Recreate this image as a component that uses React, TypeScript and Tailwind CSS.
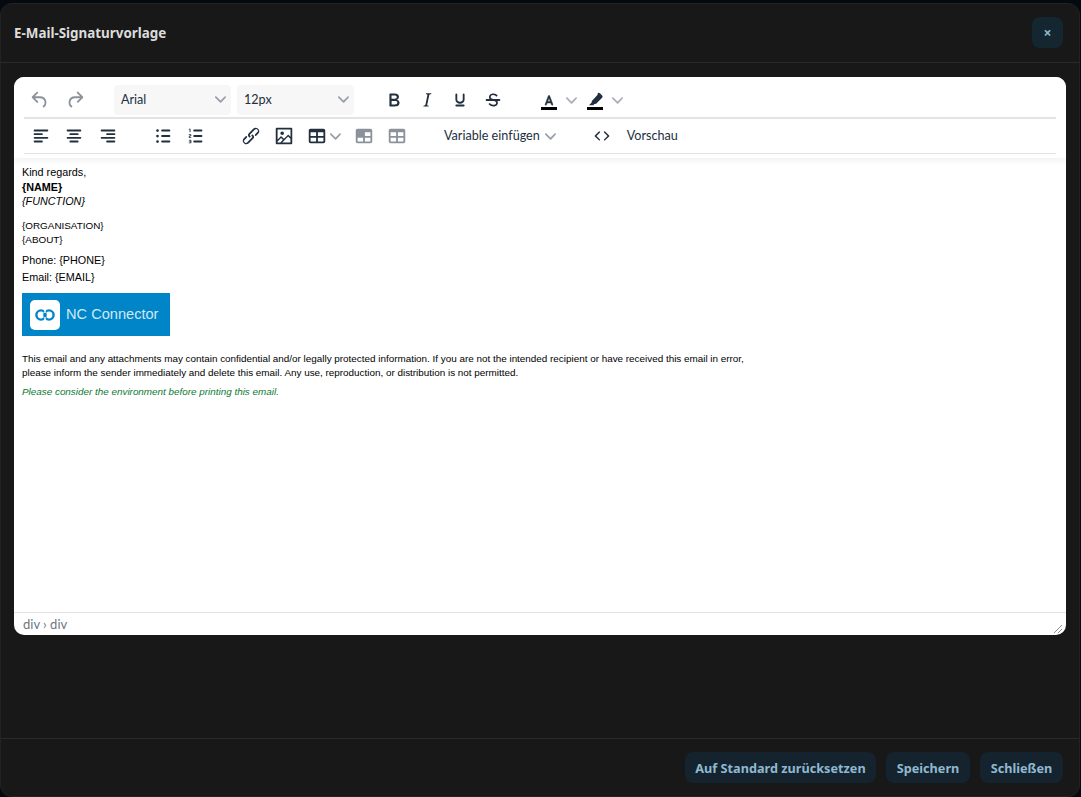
import React from "react";

const P: Record<string, string> = {
  undo: "M6.4 8H12c3.7 0 6.2 2 6.8 5.1.6 2.7-.4 5.6-2.3 6.8a1 1 0 0 1-1-1.8c1.1-.6 1.8-2.7 1.4-4.6-.5-2.1-2.1-3.5-4.9-3.5H6.4l3.3 3.3a1 1 0 1 1-1.4 1.4l-5-5a1 1 0 0 1 0-1.4l5-5a1 1 0 0 1 1.4 1.4L6.4 8Z",
  redo: "M17.6 10H12c-2.8 0-4.4 1.4-4.9 3.5-.4 2 .3 4 1.4 4.6a1 1 0 1 1-1 1.8c-2-1.2-2.9-4.1-2.3-6.8.6-3 3-5.1 6.8-5.1h5.6l-3.3-3.3a1 1 0 1 1 1.4-1.4l5 5a1 1 0 0 1 0 1.4l-5 5a1 1 0 0 1-1.4-1.4l3.3-3.3Z",
  bold: "M7.8 19c-.3 0-.5 0-.6-.2l-.2-.5V5.7c0-.2 0-.4.2-.5l.6-.2h5c1.5 0 2.7.3 3.5 1 .7.6 1.1 1.4 1.1 2.5a3 3 0 0 1-.6 1.9c-.4.6-1 1-1.6 1.2.4.1.9.3 1.3.6s.8.7 1 1.2c.4.4.5 1 .5 1.6 0 1.3-.4 2.3-1.3 3-.8.7-2.1 1-3.8 1H7.8Zm5-8.3c.6 0 1.2-.1 1.6-.5.4-.3.6-.7.6-1.3 0-1.1-.8-1.7-2.3-1.7H9.3v3.5h3.4Zm.5 6c.7 0 1.3-.1 1.7-.4.4-.4.6-.9.6-1.5s-.2-1-.7-1.4c-.4-.3-1-.4-2-.4H9.4v3.8h4Z",
  italic: "M16.7 4.7l-.1.9h-.3c-.6 0-1 0-1.4.3-.3.3-.4.6-.5 1.1l-2.1 9.8v.6c0 .5.4.8 1.4.8h.2l-.2.8H8l.2-.8h.2c1.1 0 1.8-.5 2-1.5l2-9.8.1-.5c0-.6-.4-.8-1.4-.8h-.3l.2-.9h5.8Z",
  underline: "M16 5c.6 0 1 .4 1 1v5.5a4 4 0 0 1-.4 1.8l-1 1.4a5.3 5.3 0 0 1-5.5 1 5 5 0 0 1-1.6-1c-.5-.4-.8-.9-1.1-1.4a4 4 0 0 1-.4-1.8V6c0-.6.4-1 1-1s1 .4 1 1v5.5c0 .3 0 .6.2 1l.6.7a3.3 3.3 0 0 0 2.2.8 3.4 3.4 0 0 0 2.2-.8c.3-.2.4-.5.6-.8l.2-.9V6c0-.6.4-1 1-1ZM8 17h8c.6 0 1 .4 1 1s-.4 1-1 1H8a1 1 0 0 1 0-2Z",
  strike: "M15.6 8.5c-.5-.7-1-1.1-1.3-1.3-.6-.4-1.3-.6-2-.6-2.7 0-2.8 1.7-2.8 2.1 0 1.6 1.8 2 3.2 2.3 4.4.9 4.6 2.8 4.6 3.9 0 1.4-.7 4.1-5 4.1A6.2 6.2 0 0 1 7 16.4l1.5-1.1c.4.6 1.6 2 3.7 2 1.6 0 2.5-.4 3-1.2.4-.8.3-2-.8-2.6-.7-.4-1.6-.7-2.9-1-1-.2-3.9-.8-3.9-3.6C7.6 6 10.3 5 12.4 5c2.9 0 4.2 1.6 4.7 2.4l-1.5 1.1ZM5 11h14a1 1 0 0 1 0 2H5a1 1 0 0 1 0-2Z",
  left: "M5 5h14c.6 0 1 .4 1 1s-.4 1-1 1H5a1 1 0 1 1 0-2Zm0 4h8c.6 0 1 .4 1 1s-.4 1-1 1H5a1 1 0 1 1 0-2Zm0 8h8c.6 0 1 .4 1 1s-.4 1-1 1H5a1 1 0 0 1 0-2Zm0-4h14c.6 0 1 .4 1 1s-.4 1-1 1H5a1 1 0 0 1 0-2Z",
  center: "M5 5h14c.6 0 1 .4 1 1s-.4 1-1 1H5a1 1 0 1 1 0-2Zm3 4h8c.6 0 1 .4 1 1s-.4 1-1 1H8a1 1 0 1 1 0-2Zm0 8h8c.6 0 1 .4 1 1s-.4 1-1 1H8a1 1 0 0 1 0-2Zm-3-4h14c.6 0 1 .4 1 1s-.4 1-1 1H5a1 1 0 0 1 0-2Z",
  right: "M5 5h14c.6 0 1 .4 1 1s-.4 1-1 1H5a1 1 0 1 1 0-2Zm6 4h8c.6 0 1 .4 1 1s-.4 1-1 1h-8a1 1 0 0 1 0-2Zm0 8h8c.6 0 1 .4 1 1s-.4 1-1 1h-8a1 1 0 0 1 0-2Zm-6-4h14c.6 0 1 .4 1 1s-.4 1-1 1H5a1 1 0 0 1 0-2Z",
  bullist: "M11 5h8c.6 0 1 .4 1 1s-.4 1-1 1h-8a1 1 0 0 1 0-2Zm0 6h8c.6 0 1 .4 1 1s-.4 1-1 1h-8a1 1 0 0 1 0-2Zm0 6h8c.6 0 1 .4 1 1s-.4 1-1 1h-8a1 1 0 0 1 0-2ZM4.5 6a1.5 1.5 0 1 1 3 0 1.5 1.5 0 0 1-3 0Zm0 6a1.5 1.5 0 1 1 3 0 1.5 1.5 0 0 1-3 0Zm0 6a1.5 1.5 0 1 1 3 0 1.5 1.5 0 0 1-3 0Z",
  numlist: "M10 17h8c.6 0 1 .4 1 1s-.4 1-1 1h-8a1 1 0 0 1 0-2Zm0-6h8c.6 0 1 .4 1 1s-.4 1-1 1h-8a1 1 0 0 1 0-2Zm0-6h8c.6 0 1 .4 1 1s-.4 1-1 1h-8a1 1 0 1 1 0-2ZM6 4v3.5c0 .3-.2.5-.5.5a.5.5 0 0 1-.5-.5V5h-.5a.5.5 0 0 1 0-1H6Zm-1 8.8l.2.2h1.3c.3 0 .5.2.5.5s-.2.5-.5.5H4.9a1 1 0 0 1-.9-1V13c0-.4.3-.8.6-1l1.2-.4.2-.3a.2.2 0 0 0-.2-.2H4.5a.5.5 0 0 1-.5-.5c0-.3.2-.5.5-.5h1.6c.5 0 .9.4.9 1v.1c0 .4-.3.8-.6 1l-1.2.4-.2.3ZM7 17v2c0 .6-.4 1-1 1H4.5a.5.5 0 0 1 0-1h1.2c.2 0 .3-.1.3-.3 0-.2-.1-.3-.3-.3H4.4a.4.4 0 1 1 0-.8h1.3c.2 0 .3-.1.3-.3 0-.2-.1-.3-.3-.3H4.5a.5.5 0 1 1 0-1H6c.6 0 1 .4 1 1Z",
  link: "M6.2 12.3a1 1 0 0 1 1.4 1.4l-2 2a2 2 0 1 0 2.6 2.8l4.8-4.8a1 1 0 0 0 0-1.4 1 1 0 1 1 1.4-1.3 2.9 2.9 0 0 1 0 4L9.6 20a3.9 3.9 0 0 1-5.5-5.5l2-2Zm11.6-.6a1 1 0 0 1-1.4-1.4l2-2a2 2 0 1 0-2.6-2.8L11 10.3a1 1 0 0 0 0 1.4A1 1 0 1 1 9.6 13a2.9 2.9 0 0 1 0-4L14.4 4a3.9 3.9 0 0 1 5.5 5.5l-2 2Z",
  image: "M5 15.7l3.3-3.2c.3-.3.7-.3 1 0L12 15l4.1-4c.3-.4.8-.4 1 0l2 1.9V5H5v10.7ZM5 18v1h3l2.8-2.9-2-2L5 17.9Zm14-3l-2.5-2.4-6.4 6.5H19v-4ZM4 3h16c.6 0 1 .4 1 1v16c0 .6-.4 1-1 1H4a1 1 0 0 1-1-1V4c0-.6.4-1 1-1Zm6 8a2 2 0 1 0 0-4 2 2 0 0 0 0 4Z",
  table: "M19 4a2 2 0 0 1 2 2v12a2 2 0 0 1-2 2H5a2 2 0 0 1-2-2V6c0-1.1.9-2 2-2h14ZM5 14v4h6v-4H5Zm14 0h-6v4h6v-4Zm0-6h-6v4h6V8ZM5 12h6V8H5v4Z",
  cell: "M19 4a2 2 0 0 1 2 2v12a2 2 0 0 1-2 2H5a2 2 0 0 1-2-2V6c0-1.1.9-2 2-2h14Zm-8 10H5v4h6v-4Zm8 0h-6v4h6v-4Zm0-6h-6v4h6V8Z",
  code: "M9.8 15.7c.3.3.3.8 0 1-.3.4-.9.4-1.2 0l-4.4-4.1a.8.8 0 0 1 0-1.2l4.4-4.2c.3-.3.9-.3 1.2 0 .3.3.3.8 0 1.1L6 12l3.8 3.7ZM14.2 15.7c-.3.3-.3.8 0 1 .4.4.9.4 1.2 0l4.4-4.1c.3-.3.3-.9 0-1.2l-4.4-4.2a.8.8 0 0 0-1.2 0c-.3.3-.3.8 0 1.1L18 12l-3.8 3.7Z",
  fontA: "M12 3.2c.4 0 .7.2.9.6l4.2 11.2c.2.6-.1 1.2-.6 1.3-.5.2-1-.1-1.2-.6l-.9-2.5H9.6l-.9 2.5c-.2.5-.7.8-1.2.6-.5-.1-.8-.7-.6-1.3l4.2-11.2c.2-.4.5-.6.9-.6Zm0 3.6-1.7 4.6h3.4L12 6.8Z",
  marker: "M15.5 3a2.2 2.2 0 0 1 3.1 0l2.9 2.9a2.2 2.2 0 0 1 0 3.1l-8 8-2.2.3-1.7 1.7H4l3.5-3.6.3-2.2 7.7-8.2Z",
};

function Ic({ d, cls = "", size = 22 }: { d: string; cls?: string; size?: number }) {
  return (
    <svg width={size} height={size} viewBox="0 0 24 24" className={cls} fill="currentColor">
      <path d={P[d]} />
    </svg>
  );
}

function Chev({ cls = "" }: { cls?: string }) {
  return (
    <svg width="10" height="10" viewBox="0 0 10 10" className={cls} fill="currentColor">
      <path d="M8.7 2.2c.3-.3.8-.3 1 0 .4.4.4.9 0 1.2L5.7 7.8c-.3.3-.9.3-1.2 0L.2 3.4a.8.8 0 0 1 0-1.2c.3-.3.8-.3 1.1 0L5 6l3.7-3.8Z" />
    </svg>
  );
}

function Btn({ d, cls = "text-[#222f3e]", w = "w-[33px]", size = 22 }: { d: string; cls?: string; w?: string; size?: number }) {
  return (
    <div className={`${w} h-[30px] flex items-center justify-center shrink-0`}>
      <Ic d={d} cls={cls} size={size} />
    </div>
  );
}

function Select({ label }: { label: string }) {
  return (
    <div className="w-[117px] h-[30px] rounded-[4px] bg-[#f7f7f7] flex items-center justify-between pl-[7px] pr-[5px] shrink-0">
      <span className="text-[#222f3e] mt-[1px]">{label}</span>
      <Chev cls="text-[#9aa0a8] w-[11px] h-[11px] -mt-[2px]" />
    </div>
  );
}

function Footer({ children, w }: { children: React.ReactNode; w: string }) {
  return (
    <button className={`${w} h-[31px] pt-[2px] rounded-[8px] bg-[#14232d] text-[12.7px] font-bold text-[#8fb8d1] flex items-center justify-center`}>
      {children}
    </button>
  );
}

export default function App() {
  return (
    <div className="w-[1081px] h-[797px] overflow-hidden bg-[#050a10] pt-[3px] pr-[1px] font-['Noto_Sans','Open_Sans',sans-serif]">
      <div className="h-[794px] rounded-t-[12px] rounded-b-[12px] border border-[#222222] bg-[#181818] flex flex-col">
        <div className="h-[59px] shrink-0 flex items-center justify-between pl-[13px] pr-[16px] border-b border-[#2a2a2a]">
          <div className="text-[13.4px] font-bold text-[#dcdcdc] mt-[1px]">E-Mail-Signaturvorlage</div>
          <button className="w-[31px] h-[31px] pt-[1px] rounded-[8px] bg-[#14262f] text-[#8fb8d1] text-[14px] font-bold flex items-center justify-center -mt-[2px]">
            ×
          </button>
        </div>

        <div className="flex-1 pt-[14px] px-[13px]">
          <div className="h-[558px] w-[1052px] rounded-[10px] overflow-hidden bg-white flex flex-col">
            <div className="shrink-0 shadow-[0_2px_6px_rgba(34,47,62,0.08)] px-[10px] pb-[4px] z-10 bg-white text-[12.6px] font-['Lato',sans-serif]">
              <div className="h-[42px] flex items-start pt-[8px] border-b-2 border-[#e3e3e3]">
                <Btn d="undo" cls="text-[#8b929b]" w="w-[33px] -ml-[1px]" />
                <Btn d="redo" cls="text-[#8b929b]" w="w-[34px] ml-[2px]" />
                <div className="w-[22px]" />
                <Select label="Arial" />
                <div className="w-[6px]" />
                <Select label="12px" />
                <div className="w-[23px]" />
                <Btn d="bold" />
                <Btn d="italic" />
                <Btn d="underline" />
                <Btn d="strike" w="w-[34px]" />
                <div className="w-[27px]" />
                <div className="w-[24px] h-[30px] flex flex-col items-center justify-end pb-[5.5px]">
                  <svg width="18" height="18" viewBox="0 0 24 24" className="text-[#222f3e] -mb-[4px]" fill="currentColor" stroke="currentColor" strokeWidth="0.7">
                    <path d={P.fontA} />
                  </svg>
                  <div className="w-[16px] h-[3px] bg-black relative" />
                </div>
                <Chev cls="text-[#aab0b7] ml-[5px] w-[11px] h-[11px] mt-[10px]" />
                <div className="w-[6px]" />
                <div className="w-[24px] h-[30px] flex flex-col items-center justify-end pb-[5.5px]">
                  <Ic d="marker" cls="text-[#222f3e] -mb-[2.5px]" size={18} />
                  <div className="w-[16px] h-[3px] bg-black relative" />
                </div>
                <Chev cls="text-[#aab0b7] ml-[5px] w-[11px] h-[11px] mt-[10px]" />
              </div>
              <div className="h-[35px] flex items-center border-b border-[#e3e3e3]">
                <Btn d="left" />
                <Btn d="center" w="w-[34px]" />
                <Btn d="right" />
                <div className="w-[22px]" />
                <Btn d="bullist" />
                <Btn d="numlist" />
                <div className="w-[22px]" />
                <Btn d="link" />
                <Btn d="image" />
                <div className="w-[25px] flex justify-center ml-[4px]">
                  <Ic d="table" cls="text-[#222f3e]" />
                </div>
                <Chev cls="text-[#9aa0a8] ml-[1px] w-[11px] h-[11px]" />
                <div className="w-[6px]" />
                <div className="w-[34px] flex justify-center relative">
                  <svg width="22" height="22" viewBox="0 0 24 24" className="text-[#8b929b]" fill="currentColor">
                    <path d={P.cell} />
                    <path d="M5 6h6v6H5z" />
                  </svg>
                </div>
                <Btn d="table" cls="text-[#8b929b]" w="w-[32px]" />
                <div className="w-[31px]" />
                <span className="whitespace-nowrap text-[#222f3e] mt-[1px]">Variable einfügen</span>
                <Chev cls="text-[#9aa0a8] ml-[5px] w-[11px] h-[11px]" />
                <div className="w-[30px]" />
                <Btn d="code" />
                <div className="w-[8px]" />
                <span className="text-[#222f3e] mt-[1px]">Vorschau</span>
              </div>
            </div>

            <div className="flex-1 pl-[8px] pt-[7px] text-black font-['Liberation_Sans',Arial,sans-serif]">
              <div className="text-[10.8px] leading-[14px]">Kind regards,</div>
              <div className="text-[10.8px] leading-[14px] font-bold mt-[1px]">{"{NAME}"}</div>
              <div className="text-[10.8px] leading-[14px] italic">{"{FUNCTION}"}</div>
              <div className="text-[9.9px] leading-[14px] mt-[11px]">{"{ORGANISATION}"}</div>
              <div className="text-[9.9px] leading-[14px]">{"{ABOUT}"}</div>
              <div className="text-[10.8px] leading-[14px] mt-[6px]">Phone: {"{PHONE}"}</div>
              <div className="text-[10.8px] leading-[14px] mt-[3px]">Email: {"{EMAIL}"}</div>
              <div className="w-[148px] h-[43px] bg-[#0085c9] mt-[9px] flex items-center pl-[8px]">
                <div className="w-[30px] h-[30px] rounded-[5px] bg-white flex items-center justify-center">
                  <svg width="20" height="12" viewBox="0 0 20 12" fill="none" stroke="#0085c9" strokeWidth="2.4">
                    <circle cx="6" cy="6" r="4.6" />
                    <circle cx="14" cy="6" r="4.6" />
                    <path d="M10 0.5V4M10 8v3.5" stroke="#ffffff" strokeWidth="1.4" />
                  </svg>
                </div>
                <span className="ml-[6px] text-[14.6px] text-[#d2e8f4]">NC Connector</span>
              </div>
              <div className="text-[9.9px] leading-[14px] mt-[16px] whitespace-nowrap">
                This email and any attachments may contain confidential and/or legally protected information. If you are not the intended recipient or have received this email in error,
                <br />
                please inform the sender immediately and delete this email. Any use, reproduction, or distribution is not permitted.
              </div>
              <div className="text-[9.9px] leading-[14px] italic text-[#0a7a2f] mt-[5px]">Please consider the environment before printing this email.</div>
            </div>

            <div className="h-[23px] shrink-0 border-t border-[#e3e3e3] flex items-center justify-between pl-[9px] pr-[3px]">
              <span className="text-[13px] text-[#6f7680] font-['Lato',sans-serif] mt-[1px]">div › div</span>
              <svg width="10" height="10" viewBox="0 0 10 10" className="mt-[10px]" stroke="#8b929b" strokeWidth="1">
                <path d="M1 9 9 1M5 9 9 5" />
              </svg>
            </div>
          </div>
        </div>

        <div className="h-[58px] shrink-0 border-t border-[#2a2a2a] flex items-center justify-end gap-[10px] pr-[16px] -mt-[2px]">
          <Footer w="w-[191px]">Auf Standard zurücksetzen</Footer>
          <Footer w="w-[84px]">Speichern</Footer>
          <Footer w="w-[83px]">Schließen</Footer>
        </div>
      </div>
    </div>
  );
}
